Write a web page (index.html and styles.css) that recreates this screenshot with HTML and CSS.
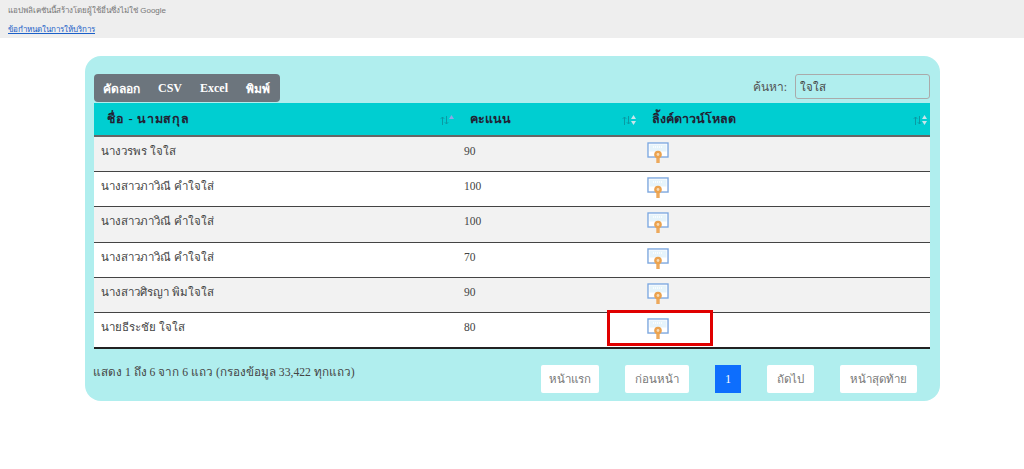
FILE: index.html
```html
<!DOCTYPE html>
<html lang="th">
<head>
    <meta charset="UTF-8">
    <title>ค้นหาคะแนน</title>
    <link rel="stylesheet" href="styles.css">
</head>
<body>

    <svg class="defs" width="0" height="0">
        <symbol id="cert" viewBox="0 0 22 21">
            <rect x="0" y="0" width="22" height="16" fill="#e6effa"/>
            <rect x="1" y="1" width="20" height="14" fill="#fff" stroke="#7ba5de" stroke-width="1.3"/>
            <rect x="2.5" y="2.5" width="17" height="7" fill="#e6f4fb"/>
            <path d="M6 5h10" stroke="#fff" stroke-width="1.5" stroke-dasharray="1 1"/>
            <rect x="9.3" y="13" width="3.4" height="8" fill="#eda95c"/>
            <circle cx="11" cy="12.5" r="3.8" fill="#eba24e"/>
            <circle cx="11" cy="12.5" r="1.4" fill="#f8dcb6"/>
        </symbol>
        <symbol id="arrows" viewBox="0 0 14 12">
            <path d="M2.5 11V3M.8 4.8l1.7-1.8 1.7 1.8M6.5 2v8M4.8 8.2l1.7 1.8 1.7-1.8" fill="none" stroke="#0a9aa3"/>
        </symbol>
    </svg>

    <div class="notice">
        <p>แอปพลิเคชันนี้สร้างโดยผู้ใช้อื่นซึ่งไม่ใช่ Google</p>
        <a href="#">ข้อกำหนดในการให้บริการ</a>
    </div>

    <div class="panel">
        <div class="top-row">
            <div class="export-btns">
                <button>คัดลอก</button>
                <button>CSV</button>
                <button>Excel</button>
                <button>พิมพ์</button>
            </div>
            <label class="search">ค้นหา: <input type="text" value="ใจใส"></label>
        </div>

        <div class="table-wrap">
            <table>
                <thead>
                    <tr>
                        <th class="col-name"><span class="th-label wide">ชื่อ - นามสกุล</span>
                            <svg class="sort" width="14" height="12" viewBox="0 0 14 12"><use href="#arrows"/><path d="M9 5l2.5-4 2.5 4z" fill="#8fa6e6"/></svg>
                        </th>
                        <th class="col-score"><span class="th-label">คะแนน</span>
                            <svg class="sort" width="14" height="12" viewBox="0 0 14 12"><use href="#arrows"/><path d="M9 5l2.5-4 2.5 4zM9 7l2.5 4 2.5-4z" fill="#c9e4ea"/></svg>
                        </th>
                        <th class="col-link"><span class="th-label">ลิ้งค์ดาวน์โหลด</span>
                            <svg class="sort" width="14" height="12" viewBox="0 0 14 12"><use href="#arrows"/><path d="M9 5l2.5-4 2.5 4zM9 7l2.5 4 2.5-4z" fill="#c9e4ea"/></svg>
                        </th>
                    </tr>
                </thead>
                <tbody>
                    <tr>
                        <td>นางวรพร ใจใส</td>
                        <td>90</td>
                        <td><svg class="cert" width="22" height="21"><use href="#cert"/></svg></td>
                    </tr>
                    <tr>
                        <td>นางสาวภาวิณี คำใจใส่</td>
                        <td>100</td>
                        <td><svg class="cert" width="22" height="21"><use href="#cert"/></svg></td>
                    </tr>
                    <tr>
                        <td>นางสาวภาวิณี คำใจใส่</td>
                        <td>100</td>
                        <td><svg class="cert" width="22" height="21"><use href="#cert"/></svg></td>
                    </tr>
                    <tr>
                        <td>นางสาวภาวิณี คำใจใส่</td>
                        <td>70</td>
                        <td><svg class="cert" width="22" height="21"><use href="#cert"/></svg></td>
                    </tr>
                    <tr>
                        <td>นางสาวศิรญา พิมใจใส</td>
                        <td>90</td>
                        <td><svg class="cert" width="22" height="21"><use href="#cert"/></svg></td>
                    </tr>
                    <tr>
                        <td>นายธีระชัย ใจใส</td>
                        <td>80</td>
                        <td><svg class="cert" width="22" height="21"><use href="#cert"/></svg></td>
                    </tr>
                </tbody>
            </table>
            <div class="highlight"></div>
        </div>

        <div class="bottom-row">
            <div class="info">แสดง 1 ถึง 6 จาก 6 แถว (กรองข้อมูล 33,422 ทุกแถว)</div>
            <div class="pages">
                <a href="#" class="first">หน้าแรก</a>
                <a href="#">ก่อนหน้า</a>
                <a href="#" class="current">1</a>
                <a href="#">ถัดไป</a>
                <a href="#">หน้าสุดท้าย</a>
            </div>
        </div>
    </div>

</body>
</html>
```

FILE: styles.css
```css
* {
    margin: 0;
    padding: 0;
    box-sizing: border-box;
}
body {
    background-color: white;
    font-family: "Liberation Serif", "Noto Sans", serif;
    font-size: 12px;
    color: #444;
}
.defs {
    position: absolute;
}
.notice {
    height: 38px;
    background: #eeeeee;
    padding: 6px 8px 0;
    font-family: "Liberation Sans", "Noto Sans", sans-serif;
    font-size: 8px;
    color: #777;
}
.notice p {
    height: 19px;
    line-height: 10px;
}
.notice a {
    display: block;
    line-height: 10px;
    color: #1a5fc8;
}
.panel {
    width: 855px;
    height: 345px;
    margin: 18px 0 0 85px;
    padding: 18px 9px 0;
    background: #b0eeee;
    border-radius: 16px;
}
.top-row {
    display: flex;
    justify-content: space-between;
    align-items: flex-start;
    height: 29px;
}
.export-btns {
    display: flex;
    height: 28px;
    background: #6c757d;
    border-radius: 4px;
    padding: 0 10px 0 9px;
    gap: 18px;
    align-items: center;
}
.export-btns button {
    background: none;
    border: none;
    color: white;
    font-family: inherit;
    font-size: 12px;
    font-weight: bold;
}
.search {
    display: flex;
    align-items: center;
    gap: 8px;
    margin-right: 1px;
    font-size: 12px;
    color: #555;
}
.search input {
    width: 135px;
    height: 25px;
    padding: 0 4px;
    background: transparent;
    border: 1px solid #aaaaaa;
    border-radius: 3px;
    font-family: inherit;
    font-size: 11.5px;
    color: #444;
}
.table-wrap {
    position: relative;
}
table {
    width: 836px;
    border-collapse: collapse;
    table-layout: fixed;
}
th {
    position: relative;
    height: 33px;
    background: #00ced1;
    border-bottom: 2px solid #666;
    text-align: left;
    font-size: 12.5px;
    color: #223;
}
.th-label {
    padding-left: 13px;
}
.th-label.wide {
    letter-spacing: 0.75px;
}
.col-name {
    width: 363px;
}
.col-score {
    width: 182px;
}
.sort {
    position: absolute;
    right: 3px;
    top: 11px;
}
td {
    height: 35.4px;
    padding: 0 0 6px 7px;
    border-bottom: 1px solid #444;
    background: white;
    font-size: 11.5px;
    color: #444;
}
tbody tr:nth-child(odd) td {
    background: #f2f2f2;
}
tbody tr:last-child td {
    border-bottom: 2px solid #222;
}
.cert {
    display: block;
    margin: 0 0 -3px 1px;
}
.highlight {
    position: absolute;
    left: 513px;
    top: 207px;
    width: 106px;
    height: 36px;
    border: 3px solid #e00000;
}
.bottom-row {
    display: flex;
    justify-content: space-between;
    align-items: flex-start;
    padding-top: 14px;
}
.info {
    margin-left: -1px;
    font-size: 11.7px;
    color: #444;
}
.pages {
    display: flex;
    gap: 26px;
    margin: 2px 14px 0 0;
}
.pages a {
    display: block;
    height: 28px;
    line-height: 28px;
    padding: 0 10px;
    background: white;
    border-radius: 2px;
    font-size: 11.5px;
    color: #777;
    text-decoration: none;
}
.pages a.first {
    padding: 0 8px;
}
.pages a.current {
    background: #0d6efd;
    border-radius: 0;
    color: white;
}
```
